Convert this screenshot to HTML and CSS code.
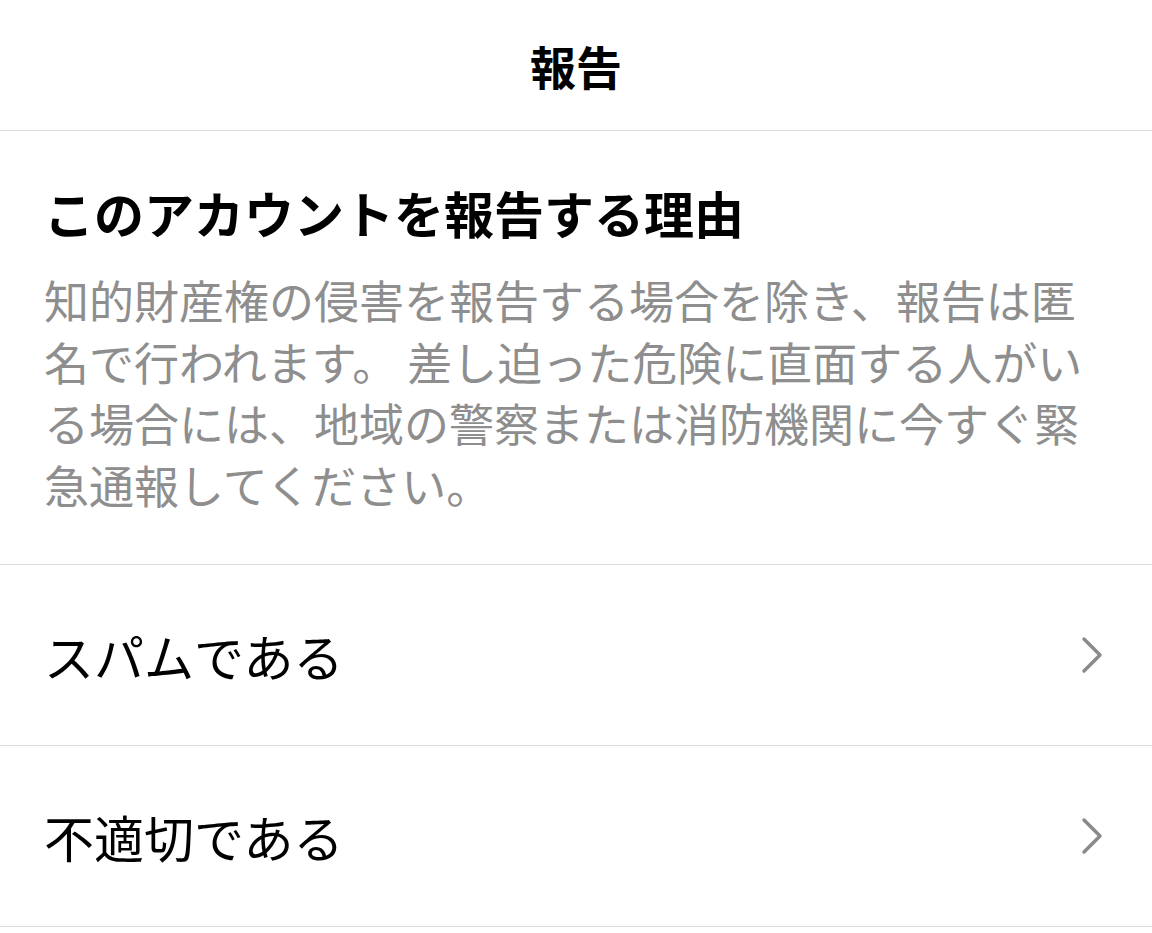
FILE: index.html
```html
<!DOCTYPE html>
<html>
<head>
    <title>報告</title>
    <link rel="stylesheet" href="styles.css">
</head>
<body>
    <header class="topbar">
        <h1 class="topbar-title">報告</h1>
    </header>

    <section class="intro">
        <h2 class="intro-title">このアカウントを報告する理由</h2>
        <p class="intro-text">知的財産権の侵害を報告する場合を除き、報告は匿名で行われます。 差し迫った危険に直面する人がいる場合には、地域の警察または消防機関に今すぐ緊急通報してください。</p>
    </section>

    <ul class="reasons">
        <li class="reason">
            <span class="reason-label">スパムである</span>
            <svg class="chevron" width="24" height="40" viewBox="0 0 24 40">
                <path d="M4 4 L20 20 L4 36" fill="none" stroke="#8a8a8a" stroke-width="3.5" stroke-linecap="round" stroke-linejoin="round"/>
            </svg>
        </li>
        <li class="reason">
            <span class="reason-label">不適切である</span>
            <svg class="chevron" width="24" height="40" viewBox="0 0 24 40">
                <path d="M4 4 L20 20 L4 36" fill="none" stroke="#8a8a8a" stroke-width="3.5" stroke-linecap="round" stroke-linejoin="round"/>
            </svg>
        </li>
    </ul>
</body>
</html>
```

FILE: styles.css
```css
body {
    margin: 0;
    background-color: #fff;
    color: #000;
    font-family: "Noto Sans CJK JP", "Noto Sans", sans-serif;
}
.topbar {
    height: 130px;
    display: flex;
    align-items: center;
    justify-content: center;
    border-bottom: 1px solid #dcdcdc;
}
.topbar-title {
    margin: 0;
    font-size: 46px;
    font-weight: 700;
    line-height: 1;
}
.intro {
    padding: 51px 44px 49px;
    border-bottom: 1px solid #dcdcdc;
}
.intro-title {
    margin: 0 0 27px;
    font-size: 50px;
    font-weight: 700;
    line-height: 60px;
}
.intro-text {
    margin: 0;
    font-size: 45px;
    line-height: 61.5px;
    color: #8e8e8e;
}
.reasons {
    list-style: none;
    margin: 0;
    padding: 0;
}
.reason {
    height: 180px;
    padding: 0 48px 0 44px;
    display: flex;
    align-items: center;
    justify-content: space-between;
    border-bottom: 1px solid #dcdcdc;
}
.reason-label {
    font-size: 50px;
    line-height: 1;
}
```
